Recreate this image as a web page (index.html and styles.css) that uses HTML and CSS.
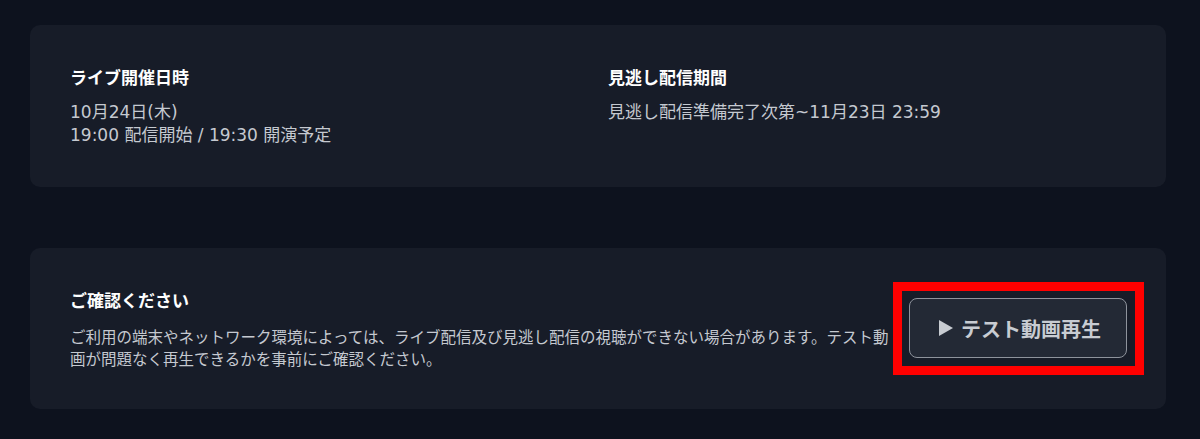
FILE: index.html
```html
<!DOCTYPE html>
<html lang="ja">
<head>
<meta charset="UTF-8">
<title>ライブ配信情報</title>
<link rel="stylesheet" href="styles.css">
</head>
<body>
<main class="page">
    <section class="card schedule">
        <div class="info">
            <h2 class="info-title">ライブ開催日時</h2>
            <p class="info-text">10月24日(木)<br>19:00 配信開始 / 19:30 開演予定</p>
        </div>
        <div class="info">
            <h2 class="info-title">見逃し配信期間</h2>
            <p class="info-text">見逃し配信準備完了次第~11月23日 23:59</p>
        </div>
    </section>
    <section class="card notice">
        <div class="notice-body">
            <h2 class="info-title">ご確認ください</h2>
            <p class="notice-text">ご利用の端末やネットワーク環境によっては、ライブ配信及び見逃し配信の視聴ができない場合があります。テスト動画が問題なく再生できるかを事前にご確認ください。</p>
        </div>
        <div class="highlight">
            <button type="button" class="test-btn">
                <svg class="play" width="14" height="16" viewBox="0 0 14 16"><path d="M0 0L14 8L0 16Z" fill="currentColor"/></svg>
                テスト動画再生
            </button>
        </div>
    </section>
</main>
</body>
</html>
```

FILE: styles.css
```css
body{
    margin:0;
    background:#0d121e;
    font-family:"DejaVu Sans","Noto Sans CJK JP",sans-serif;
    color:#c5c9d0;
}
.page{
    padding:25px 34px 30px 30px;
    display:flex;
    flex-direction:column;
    gap:61px;
}
.card{
    background:#171c28;
    border-radius:10px;
}
.schedule{
    display:grid;
    grid-template-columns:1fr 1fr;
    gap:20px;
    padding:40px;
}
.info-title{
    margin:0 0 13px;
    font-family:"Noto Sans CJK JP",sans-serif;
    font-size:17px;
    line-height:23px;
    font-weight:700;
    color:#fff;
}
.info-text{
    margin:0;
    font-size:17px;
    line-height:23px;
}
.notice{
    display:flex;
    align-items:center;
    padding:34px 22px 34px 40px;
}
.notice .info-title{margin-bottom:14px;}
.notice-body{flex:1;}
.notice-text{
    margin:0;
    font-family:"Noto Sans CJK JP",sans-serif;
    font-size:15.5px;
    line-height:22px;
}
.highlight{
    border:9px solid #ff0000;
    padding:7px 8px 8px 7px;
}
.test-btn{
    display:flex;
    align-items:center;
    justify-content:center;
    gap:8px;
    width:218px;
    height:60px;
    padding:0 0 0 4px;
    background:#232935;
    border:1px solid #8e939c;
    border-radius:8px;
    color:#c8ccd2;
    font-family:"Noto Sans CJK JP",sans-serif;
    font-size:20px;
    font-weight:700;
    cursor:pointer;
}
.play{flex:none;}
```
